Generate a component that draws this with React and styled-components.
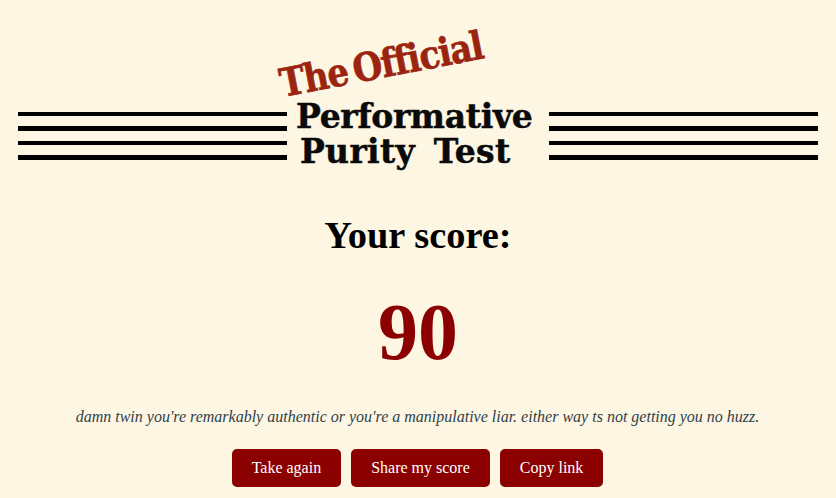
import React from "react";
import styled, { createGlobalStyle } from "styled-components";

const Global = createGlobalStyle`
  html, body { margin: 0; padding: 0; background: #fdf6e3; }
  body { font-family: "Liberation Serif", "Times New Roman", serif; }
`;

const Page = styled.main`
  width: 836px;
  height: 498px;
  overflow: hidden;
  display: flex;
  flex-direction: column;
  align-items: center;
`;

const Banner = styled.header`
  width: 800px;
  height: 172px;
  flex: none;
  display: grid;
  grid-template-columns: 269px 262px 269px;
  align-items: end;
`;

const Rules = styled.div`
  display: flex;
  flex-direction: column;
  gap: 10px;
  padding-bottom: 12px;
`;

const Rule = styled.div`
  height: 4.6px;
  background: #000;
`;

const Lockup = styled.div`
  position: relative;
  display: flex;
  flex-direction: column;
  align-items: flex-start;
  padding-bottom: 3px;
  font-family: "DejaVu Serif", "Liberation Serif", serif;
  font-weight: 700;
  color: #0a0a0a;
`;

const Tag = styled.div`
  position: absolute;
  left: -3px;
  top: -36px;
  font-size: 39px;
  line-height: 40px;
  letter-spacing: -1.2px;
  word-spacing: -6px;
  color: #9b2410;
  -webkit-text-stroke: 0.7px #9b2410;
  white-space: nowrap;
  transform: rotate(-11deg) scaleX(0.87);
  transform-origin: left bottom;
`;

const TitleLine = styled.div`
  margin-left: ${(p) => p.$indent}px;
  font-size: 33px;
  line-height: 35px;
  letter-spacing: ${(p) => p.$track}px;
  word-spacing: 7px;
  -webkit-text-stroke: 0.5px #0a0a0a;
  white-space: nowrap;
`;

const Heading = styled.h1`
  margin: 41px 0 0;
  font-size: 38.4px;
  line-height: 44px;
  font-weight: 700;
  color: #000;
`;

const Score = styled.div`
  margin-top: 29px;
  font-size: 80px;
  line-height: 92px;
  font-weight: 700;
  color: #8b0000;
`;

const Message = styled.p`
  margin: 30px 0 0 -1px;
  font-size: 16px;
  line-height: 18px;
  font-style: italic;
  color: #2f3f48;
  white-space: nowrap;
`;

const Actions = styled.div`
  margin: 23px 0 0 -1px;
  display: flex;
  gap: 10px;
`;

const Button = styled.button`
  height: 38px;
  padding: 0 20px;
  border: 0;
  border-radius: 5px;
  background: #8b0000;
  color: #fff;
  font-family: inherit;
  font-size: 16px;
  cursor: pointer;
`;

export default function App() {
  return (
    <>
      <Global />
      <Page>
        <Banner>
          <Rules><Rule /><Rule /><Rule /><Rule /></Rules>
          <Lockup>
            <Tag>The Official</Tag>
            <TitleLine $indent={9} $track={-0.3}>Performative</TitleLine>
            <TitleLine $indent={13} $track={0.3}>Purity Test</TitleLine>
          </Lockup>
          <Rules><Rule /><Rule /><Rule /><Rule /></Rules>
        </Banner>
        <Heading>Your score:</Heading>
        <Score>90</Score>
        <Message>damn twin you're remarkably authentic or you're a manipulative liar. either way ts not getting you no huzz.</Message>
        <Actions>
          <Button>Take again</Button>
          <Button>Share my score</Button>
          <Button>Copy link</Button>
        </Actions>
      </Page>
    </>
  );
}
